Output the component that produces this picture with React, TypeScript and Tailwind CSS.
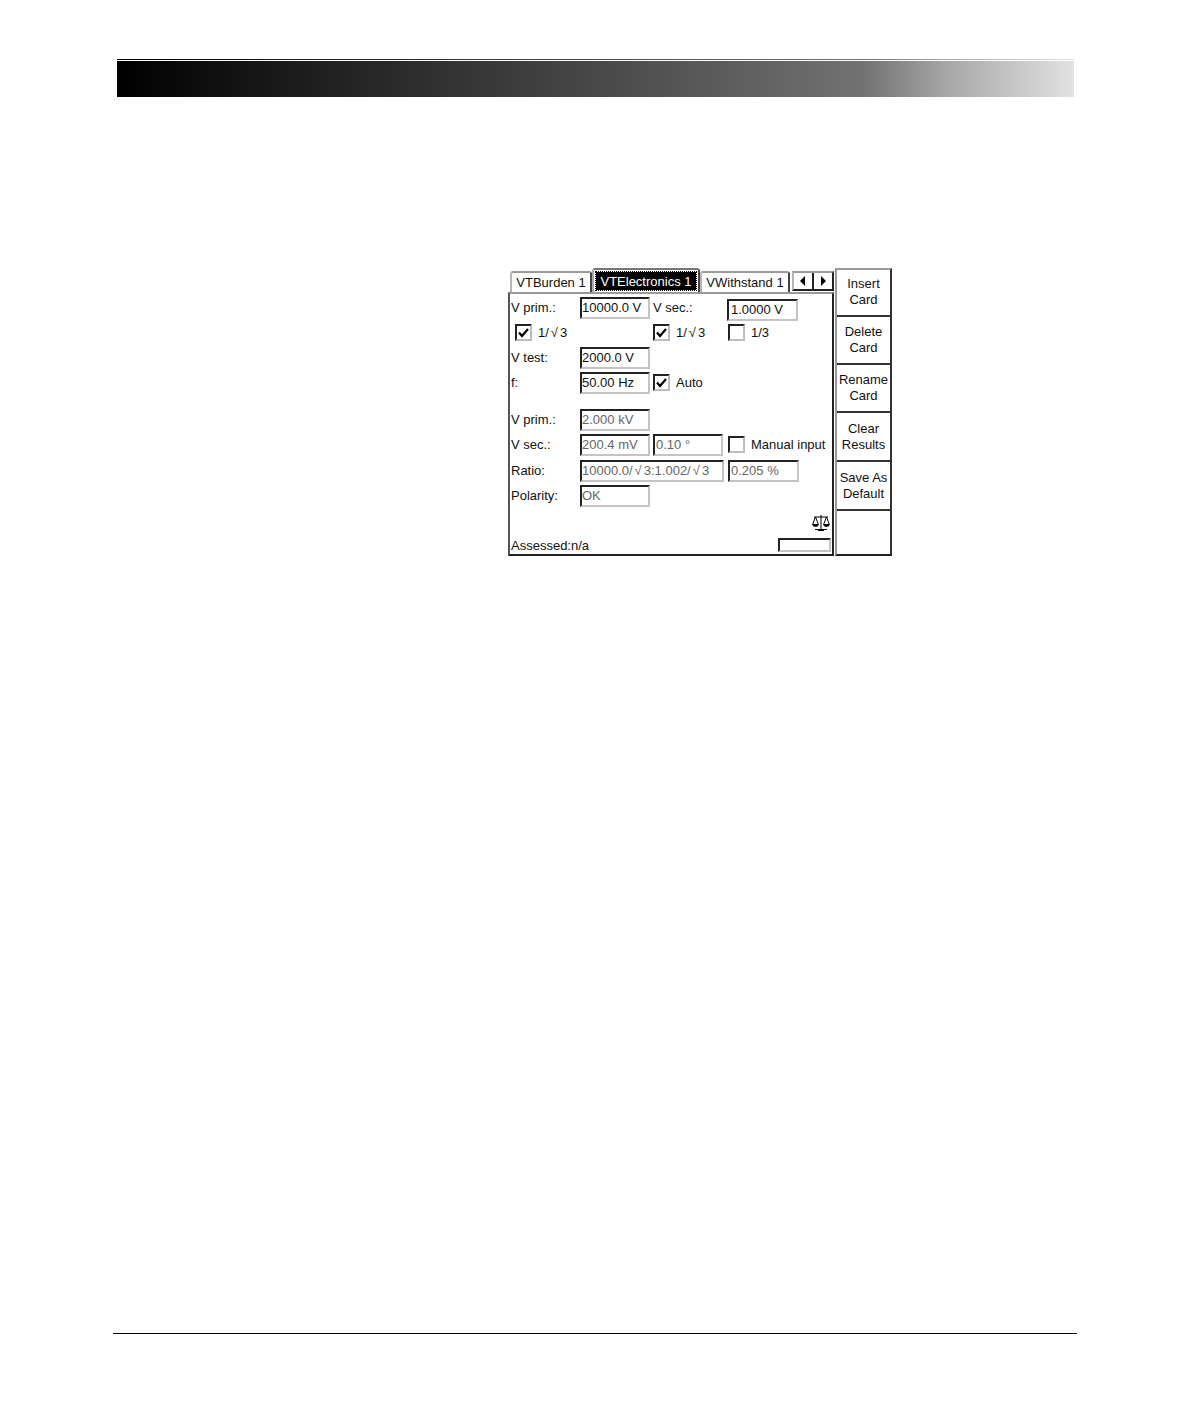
const barGradient =
  "bg-[linear-gradient(to_right,#000000_0%,#1c1c1c_19%,#484848_50%,#727272_78%,#a8a8a8_87%,#e2e2e2_100%)]";

const Root = () => <span className="px-[2px]">√</span>;

const Field = ({
  value,
  disabled = false,
  className = "",
}: {
  value?: React.ReactNode;
  disabled?: boolean;
  className?: string;
}) => (
  <div
    className={`h-[22px] flex items-center whitespace-pre overflow-hidden border-2 border-t-[#222222] border-l-[#222222] border-r-[#c4c4c4] border-b-[#c4c4c4] ${
      disabled ? "text-[#666666]" : "text-[#111111]"
    } ${className}`}
  >
    <span>{value}</span>
  </div>
);

const Check = ({
  checked = false,
  label,
  className = "",
}: {
  checked?: boolean;
  label: React.ReactNode;
  className?: string;
}) => (
  <div className={`flex items-center gap-[6px] whitespace-nowrap ${className}`}>
    <div className="w-[17px] h-[17px] shrink-0 flex items-center justify-center border-2 border-t-[#222222] border-l-[#222222] border-r-[#bdbdbd] border-b-[#bdbdbd]">
      {checked && (
        <svg width="13" height="13" viewBox="0 0 13 13">
          <path d="M2 6.5 L5 10 L11 3" fill="none" stroke="#000" strokeWidth="2.2" />
        </svg>
      )}
    </div>
    <span>{label}</span>
  </div>
);

const Tab = ({ label, className = "" }: { label: string; className?: string }) => (
  <div
    className={`h-[21px] pb-px flex items-center justify-center bg-white rounded-t-[3px] border-t-2 border-l-2 border-r-2 border-t-[#9a9a9a] border-l-[#b5b5b5] border-r-[#444444] whitespace-nowrap ${className}`}
  >
    {label}
  </div>
);

const softKeys = [
  { top: "Insert", bottom: "Card", style: "h-[47px] pb-[2px]" },
  { top: "Delete", bottom: "Card", style: "h-[48px] pb-[2px]" },
  { top: "Rename", bottom: "Card", style: "h-[48px] pb-[2px]" },
  { top: "Clear", bottom: "Results", style: "h-[49px]" },
  { top: "Save As", bottom: "Default", style: "h-[49px]" },
];

const Row = ({ children, className = "" }: { children: React.ReactNode; className?: string }) => (
  <div className={`flex items-center h-[25px] ${className}`}>{children}</div>
);

const Label = ({ text }: { text: string }) => <div className="w-[69px] shrink-0 whitespace-nowrap">{text}</div>;

export default function App() {
  return (
    <div className="w-[1190px] h-[1418px] bg-white flex flex-col text-[13px] leading-none text-[#111111] font-['Liberation_Sans',Arial,sans-serif]">
      {/* header bar */}
      <div className="mt-[59px] ml-[117px] w-[957px]">
        <div className={`h-px ${barGradient}`} />
        <div className={`h-[36px] mt-px ${barGradient}`} />
      </div>

      {/* device screen */}
      <div className="mt-[171px] ml-[508px] w-[384px] h-[288px] flex">
        <div className="w-[326px] flex flex-col">
          <div className="h-[24px] flex items-end pl-[2px]">
            <Tab label="VTBurden 1" className="w-[82px]" />
            <div className="h-[24px] w-[108px] p-[2px] flex bg-white rounded-t-[3px] border-t-2 border-l-2 border-r-2 border-t-[#777777] border-l-[#aaaaaa] border-r-[#444444]">
              <div className="flex-1 bg-black text-white flex items-center justify-center outline-1 outline-dotted outline-black whitespace-nowrap">
                VTElectronics 1
              </div>
            </div>
            <Tab label="VWithstand 1" className="w-[90px]" />
            <div className="ml-[2px] mb-px h-[20px] w-[42px] flex border-2 border-t-[#9a9a9a] border-l-[#b5b5b5] border-r-[#222222] border-b-[#222222]">
              <div className="flex-1 flex items-center justify-center border-r-2 border-[#222222]">
                <svg width="6" height="10" viewBox="0 0 6 10">
                  <path d="M5 0 L0 5 L5 10 Z" fill="#000" />
                </svg>
              </div>
              <div className="flex-1 flex items-center justify-center">
                <svg width="6" height="10" viewBox="0 0 6 10">
                  <path d="M1 0 L6 5 L1 10 Z" fill="#000" />
                </svg>
              </div>
            </div>
          </div>

          <div className="flex-1 flex flex-col pl-px pt-px border-t-2 border-t-[#9a9a9a] border-l-2 border-l-[#555555] border-r-2 border-r-[#222222] border-b-2 border-b-[#222222]">
            <Row>
              <Label text="V prim.:" />
              <Field value="10000.0 V" className="w-[70px]" />
              <div className="w-[77px] pl-[3px]">V sec.:</div>
              <Field value="1.0000 V" className="w-[71px] mt-[4px] pl-[2px]" />
            </Row>
            <Row>
              <Check checked label={<>1/<Root />3</>} className="w-[142px] pl-[4px]" />
              <Check checked label={<>1/<Root />3</>} className="w-[75px]" />
              <Check label="1/3" />
            </Row>
            <Row>
              <Label text="V test:" />
              <Field value="2000.0 V" className="w-[70px]" />
            </Row>
            <Row>
              <Label text="f:" />
              <Field value="50.00 Hz" className="w-[70px]" />
              <Check checked label="Auto" className="ml-[3px]" />
            </Row>
            <Row className="mt-[12px]">
              <Label text="V prim.:" />
              <Field disabled value="2.000 kV" className="w-[70px]" />
            </Row>
            <Row>
              <Label text="V sec.:" />
              <Field disabled value="200.4 mV" className="w-[70px]" />
              <Field disabled value="0.10 °" className="w-[70px] ml-[3px] pl-px" />
              <Check label="Manual input" className="ml-[5px]" />
            </Row>
            <Row className="mt-px">
              <Label text="Ratio:" />
              <Field disabled value={<>10000.0/<Root />3:1.002/<Root />3</>} className="w-[144px]" />
              <Field disabled value="0.205 %" className="w-[71px] ml-[4px] pl-px" />
            </Row>
            <Row>
              <Label text="Polarity:" />
              <Field disabled value="OK" className="w-[70px]" />
            </Row>
            <div className="flex justify-end pr-[2px] mt-[6px] h-[20px]">
              <svg width="18" height="18" viewBox="0 0 18 18" fill="none" stroke="#000" strokeWidth="1">
                <path d="M9 1 V16 M3 15.5 H15 M6 16.5 H12 M2 3 H16" />
                <path d="M3.5 3 L0.8 10 M3.5 3 L6.2 10 M14.5 3 L11.8 10 M14.5 3 L17.2 10" />
                <path d="M0.5 10.5 H6.5 C6 13 1 13 0.5 10.5 Z M11.5 10.5 H17.5 C17 13 12 13 11.5 10.5 Z" fill="#000" />
              </svg>
            </div>
            <div className="flex items-end justify-between pr-px pb-[2px] h-[20px]">
              <span>Assessed:n/a</span>
              <div className="w-[53px] h-[14px] border-2 border-t-[#222222] border-l-[#222222] border-r-[#c4c4c4] border-b-[#c4c4c4]" />
            </div>
          </div>
        </div>

        <div className="ml-px w-[57px] flex flex-col border-t-2 border-t-[#9a9a9a] border-l-2 border-l-[#9a9a9a] border-r-2 border-r-[#333333] border-b-2 border-b-[#222222]">
          {softKeys.map((key) => (
            <div
              key={key.top}
              className={`${key.style} flex flex-col items-center justify-center gap-[3px] border-b-2 border-b-[#333333] whitespace-nowrap`}
            >
              <span>{key.top}</span>
              <span>{key.bottom}</span>
            </div>
          ))}
          <div className="flex-1" />
        </div>
      </div>

      {/* footer rule */}
      <div className="mt-auto mb-[84px] ml-[113px] w-[964px] h-px bg-black" />
    </div>
  );
}
